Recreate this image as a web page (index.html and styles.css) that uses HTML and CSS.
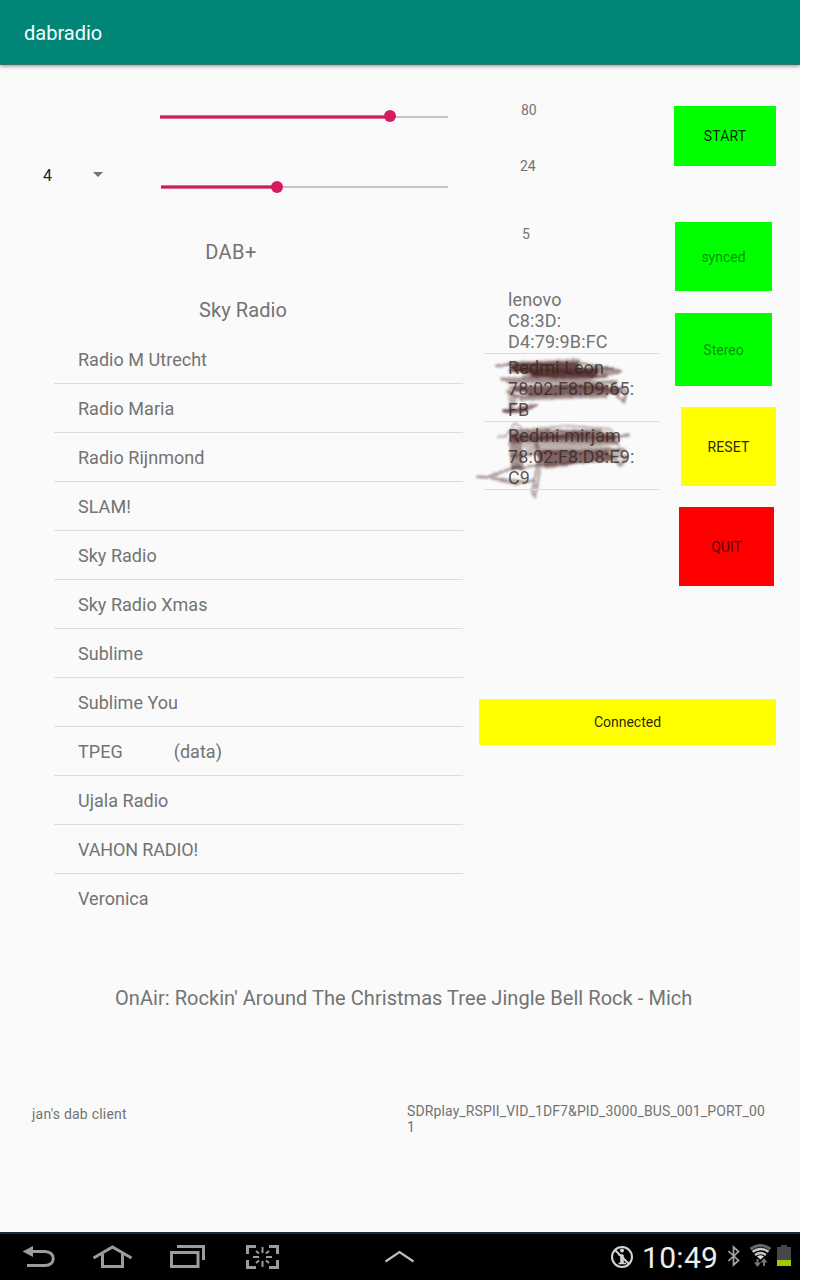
FILE: index.html
```html
<!DOCTYPE html>
<html lang="en">
<head>
<meta charset="utf-8">
<title>dabradio</title>
<link rel="stylesheet" href="styles.css">
</head>
<body>
<div class="app">
  <header class="appbar"><h1>dabradio</h1></header>
  <main class="content">
    <div class="panels">
      <section class="tuner">
        <div class="slider gain"><i class="fill"></i><i class="thumb"></i></div>
        <div class="select-row">
          <div class="select"><span>4</span><i class="caret"></i></div>
          <div class="slider lna"><i class="fill"></i><i class="thumb"></i></div>
        </div>
        <p class="mode">DAB+</p>
        <p class="station">Sky Radio</p>
        <ul class="stations">
          <li>Radio M Utrecht</li>
          <li>Radio Maria</li>
          <li>Radio Rijnmond</li>
          <li>SLAM!</li>
          <li>Sky Radio</li>
          <li>Sky Radio Xmas</li>
          <li>Sublime</li>
          <li>Sublime You</li>
          <li>TPEG<span class="kind">(data)</span></li>
          <li>Ujala Radio</li>
          <li class="caps">VAHON RADIO!</li>
          <li>Veronica</li>
        </ul>
      </section>
      <section class="side">
        <div class="side-top">
          <div class="readings">
            <span class="v80">80</span>
            <span class="v24">24</span>
            <span class="v5">5</span>
            <ul class="devices">
              <li>lenovo<br>C8:3D:<br>D4:79:9B:FC</li>
              <li class="marked">Redmi Leon<br>78:02:F8:D9:65:<br>FB</li>
              <li class="marked">Redmi mirjam<br>78:02:F8:D8:E9:<br>C9</li>
              <svg class="scribble" width="190" height="150" viewBox="470 355 190 150" fill="none" stroke="#4b2522" stroke-linecap="round" stroke-linejoin="round">
                <defs><filter id="rough" x="-5%" y="-5%" width="110%" height="110%"><feTurbulence type="fractalNoise" baseFrequency=".35" numOctaves="2" seed="4" result="n"/><feDisplacementMap in="SourceGraphic" in2="n" scale="3" xChannelSelector="R" yChannelSelector="G"/><feGaussianBlur stdDeviation=".9"/></filter></defs>
                <g filter="url(#rough)">
                  <path stroke-width="6" opacity=".82" d="M514 367 L576 366 L518 370 L596 371 L534 374 L594 374"/>
                  <path stroke-width="4" opacity=".45" d="M510 364 L578 361 M510 371 L612 369 L524 377 L606 376"/>
                  <path stroke-width="2.5" opacity=".5" d="M496 366 L512 364 L580 363 L621 371 L598 377 L560 378 L512 370 L618 373"/>
                  <path stroke-width="6" opacity=".72" d="M516 389 L560 388 L606 388 L530 393 L618 391"/>
                  <path stroke-width="3" opacity=".48" d="M502 379 L590 380 L508 382 L616 382 L560 386 L624 389 M508 392 L516 396 L606 396 L520 399 M612 384 L626 392 L624 402 L616 394"/>
                  <path stroke-width="4" opacity=".7" d="M504 411 L520 411 L526 409"/>
                  <path stroke-width="2" opacity=".6" d="M518 408 L537 405 L522 412"/>
                  <path stroke-width="5" opacity=".35" d="M511 388 L511 411 L515 396"/>
                  <path stroke-width="7" opacity=".78" d="M514 437 L612 437"/>
                  <path stroke-width="3" opacity=".5" d="M510 432 L600 431 L512 442 L616 442 M608 438 L628 435"/>
                  <path stroke-width="1.8" opacity=".38" d="M498 437 L506 436 L515 423 L524 430 L568 426 L610 429 L620 440 M514 430 L606 432 M615 438 L620 450"/>
                  <path stroke-width="6" opacity=".48" d="M512 438 L514 466 L519 440 L520 466"/>
                  <path stroke-width="3" opacity=".35" d="M524 446 L618 443 L526 450 L606 448 L620 452 M512 468 L524 469"/>
                  <path stroke-width="6" opacity=".7" d="M540 454 L606 454 L542 459 L610 458 L546 463 L566 461"/>
                  <path stroke-width="3.500" opacity=".45" d="M512 456 L538 453 M536 442 L541 464 L546 467 L572 463 M606 454 L627 457 L620 465 L614 458 M540 452 L624 450"/>
                  <path stroke-width="2" opacity=".48" d="M477 477 L492 476 L510 469 L540 465 M534 480 L516 484 L502 481 L487 477 L518 466 M481 477 L529 482"/>
                  <path stroke-width="2.500" opacity=".4" d="M538 462 L532 492 L535 497 L541 464 M534 486 L538 486"/>
                </g>
              </svg>
            </ul>
          </div>
          <div class="buttons">
            <button class="start">START</button>
            <button class="synced">synced</button>
            <button class="stereo">Stereo</button>
            <button class="reset">RESET</button>
            <button class="quit">QUIT</button>
          </div>
        </div>
        <button class="connected">Connected</button>
      </section>
    </div>
    <p class="onair"><span>OnAir: Rockin' Around The Christmas Tree Jingle Bell Rock - Mich</span></p>
    <footer class="info"><span class="client">jan's dab client</span><span class="device">SDRplay_RSPII_VID_1DF7&amp;PID_3000_BUS_001_PORT_00<br>1</span></footer>
  </main>
  <nav class="sysbar">
    <svg class="nav-icons" width="430" height="46" viewBox="0 1234 430 46" fill="none" stroke="#9c9c9c" stroke-width="3">
      <path d="M31 1251.500 H45 C56 1251.500 56 1265.500 45 1265.500 H27"/>
      <path d="M22.500 1251.500 L33 1246 V1257 Z" fill="#9c9c9c" stroke="none"/>
      <path d="M93.500 1258 L112.500 1247 L131.500 1258 M102.500 1254 V1266.500 H122.500 V1254"/>
      <path d="M171.500 1252.500 H198 V1266.500 H171.500 Z M177 1246.500 H203.500 V1260"/>
      <path d="M247.500 1254 V1246.500 H256 M269 1246.500 H277.500 V1254 M277.500 1260 V1267.500 H269 M256 1267.500 H247.500 V1260"/>
      <path stroke-width="2" d="M262.500 1247 V1253 M262.500 1261 V1267 M253 1257 H259 M266 1257 H272 M256 1251 L259 1253.500 M269 1251 L266 1253.500 M256 1263 L259 1260.500 M269 1263 L266 1260.500"/>
      <path stroke="#bdbdbd" stroke-width="2.200" d="M385.500 1261.500 L399.500 1252 L413.500 1261.500"/>
    </svg>
    <div class="status">
      <svg width="24" height="24" viewBox="610 1245 24 24" fill="none" stroke="#d2d5d2" stroke-width="2">
        <circle cx="622" cy="1257" r="10"/><path d="M615 1250 L629 1264"/>
        <path stroke-width="3.600" d="M622 1255 V1263"/><path stroke-width="1.500" d="M618.500 1255 H623 M618.500 1263.500 H626"/><circle cx="622" cy="1250.500" r="2" fill="#d2d5d2" stroke="none"/>
      </svg>
      <time>10:49</time>
      <svg class="radios" width="68" height="28" viewBox="726 1243 68 28" fill="none">
        <path stroke="#a5a5a5" stroke-width="1.700" d="M728.500 1251 L738.500 1260.500 L733.500 1265 V1247 L738.500 1251.500 L728.500 1261"/>
        <path stroke="#666" stroke-width="3" d="M750.500 1249 Q760.500 1242 770.500 1249"/>
        <path stroke="#c8c8c8" stroke-width="2.400" d="M752.500 1251.800 Q760.500 1246 768.500 1251.800 M755 1255 Q760.500 1251 766 1255"/>
        <path fill="#ddd" d="M757 1256.500 Q760.500 1254 764 1256.500 L760.500 1259.500 Z"/>
        <path stroke="#777" stroke-width="2" d="M757.500 1259 V1265 M764 1266 V1260"/>
        <path fill="#777" d="M754 1262.500 H761 L757.500 1267 Z M760.500 1262.500 H767.500 L764 1258 Z"/>
        <path fill="#484848" d="M777 1247 H781 V1245 H787 V1247 H791 V1266 H777 Z"/><path fill="#99cc00" d="M777 1260 H791 V1266 H777 Z"/>
      </svg>
    </div>
  </nav>
</div>
</body>
</html>
```

FILE: styles.css
```css
* { box-sizing: border-box; }
body { margin: 0; background: #fff; font-family: Roboto, sans-serif; color: #737373; }
p, ul, h1 { margin: 0; padding: 0; font-weight: 400; }
ul { list-style: none; }
.app { width: 800px; height: 1280px; display: flex; flex-direction: column; background: #fafafa; overflow: hidden; }
.appbar { height: 65px; flex: none; padding: 21px 24px 0; background: #008577; border-bottom: 1px solid #35756e; box-shadow: 0 1px 4px rgba(0,0,0,.45); color: #f4fffd; }
.appbar h1 { font-size: 20px; line-height: 24px; font-weight: 400; }
.content { flex: 1; display: flex; flex-direction: column; }
.panels { display: flex; height: 858px; }
.tuner { width: 478px; display: flex; flex-direction: column; }

.slider { position: relative; height: 14px; background: linear-gradient(#c4c4c4, #c4c4c4) 0 6px / 100% 2px no-repeat; }
.slider .fill { display: block; height: 4px; border: solid #e0688f; border-width: 1px 0; background: #cf1b5b; transform: translateY(5px); }
.slider .thumb { position: absolute; top: 0; width: 12px; height: 12px; border-radius: 50%; background: #d81b60; }
.gain { margin: 45px 30px 0 160px; }
.gain .fill { width: 230px; }
.gain .thumb { left: 224px; }
.select-row { display: flex; height: 40px; margin-top: 41px; }
.select { width: 161px; display: flex; align-items: flex-start; padding-left: 43px; color: #222; font-size: 16px; line-height: 22px; }
.select span { width: 50px; }
.caret { width: 0; height: 0; margin-top: 7px; border: 5px solid transparent; border-top: 5.5px solid #737373; border-bottom: 0; }
.lna { width: 287px; margin-top: 16px; background-position-y: 5px; }
.lna .fill { width: 116px; transform: translateY(4px); }
.lna .thumb { left: 110px; }
.mode, .station { font-size: 20px; line-height: 24px; text-align: center; }
.mode { margin-top: 35px; width: 462px; letter-spacing: .4px; }
.station { margin-top: 34px; width: 486px; letter-spacing: .1px; }
.stations { margin: 13px 15px 0 54px; font-size: 18px; letter-spacing: .03px; }
.stations li { height: 49px; padding: 1px 24px 0; line-height: 47px; border-bottom: 1px solid #dcdcdc; }
.stations li:last-child { border: 0; }
.stations .caps { letter-spacing: -.13px; }
.kind { margin-left: 51px; }

.side { width: 322px; display: flex; flex-direction: column; }
.side-top { display: flex; height: 633px; }
.readings { width: 182px; display: flex; flex-direction: column; padding: 37px 0 0 6px; font-size: 14px; line-height: 16px; }
.v80 { padding-left: 37px; }
.v24 { padding-left: 36px; margin-top: 40px; }
.v5 { padding-left: 38px; margin-top: 52px; }
.devices { position: relative; isolation: isolate; width: 175px; margin-top: 44px; font-size: 18px; line-height: 21px; letter-spacing: .12px; }
.devices li { height: 68px; padding: 3px 0 0 24px; border-bottom: 1px solid #dcdcdc; white-space: nowrap; }
.devices .marked { color: rgba(50,38,37,.78); }
.scribble { position: absolute; z-index: -1; left: -14px; top: 69px; }
.buttons { display: flex; flex-direction: column; padding-top: 41px; }
button { border: 0; padding: 0; font: 14px/16px Roboto, sans-serif; color: rgba(0,0,0,.87); }
.start { width: 102px; height: 60px; margin-left: 14px; background: #0f0; letter-spacing: .2px; }
.synced { width: 97px; height: 69px; margin: 56px 0 0 15px; background: #0f0; color: rgba(0,0,0,.46); }
.stereo { width: 97px; height: 73px; margin: 22px 0 0 15px; background: #0f0; color: rgba(0,0,0,.46); }
.reset { width: 95px; height: 79px; margin: 21px 0 0 21px; background: #ff0; letter-spacing: .1px; }
.quit { width: 95px; height: 79px; margin: 21px 0 0 19px; background: #f00; color: rgba(0,0,0,.7); }
.connected { width: 297px; height: 46px; margin: 1px 0 0 1px; background: #ff0; }

.onair { margin-top: 63px; padding-left: 115px; font-size: 20px; line-height: 24px; letter-spacing: .05px; white-space: nowrap; }
.info { display: flex; margin-top: 93px; font-size: 14px; line-height: 16px; letter-spacing: .12px; white-space: nowrap; }
.client { width: 375px; margin-left: 32px; padding-top: 3px; letter-spacing: .22px; }

.sysbar { flex: none; height: 48px; display: flex; background: #000; border-top: 2px solid #0d2c3c; }
.status { display: flex; flex: 1; align-items: flex-start; padding: 11px 0 0 180px; }
.status time { width: 83px; margin-left: 8px; margin-top: -3px; font-size: 30px; line-height: 32px; letter-spacing: .3px; color: #eee; white-space: nowrap; }
.radios { margin: -2px 0 0 1px; }
```
